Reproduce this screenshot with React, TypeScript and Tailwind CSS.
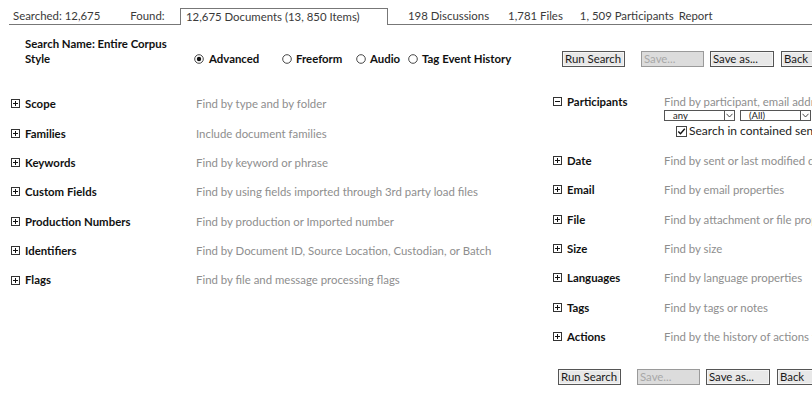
import React from 'react';

const font = "font-['Lato','Liberation_Sans',sans-serif]";

function PlusBox({ minus = false }: { minus?: boolean }) {
  return (
    <svg width="9" height="9" viewBox="0 0 9 9" className="shrink-0">
      <rect x="0.5" y="0.5" width="8" height="8" fill="white" stroke="#333" />
      <line x1="2" y1="4.5" x2="7" y2="4.5" stroke="#111" />
      {!minus && <line x1="4.5" y1="2" x2="4.5" y2="7" stroke="#111" />}
    </svg>
  );
}

function Radio({ checked = false }: { checked?: boolean }) {
  return (
    <svg width="10" height="10" viewBox="0 0 10 10" className="shrink-0">
      <circle cx="5" cy="5" r="4.3" fill="white" stroke="#333" strokeWidth="0.9" />
      {checked && <circle cx="5" cy="5" r="2.2" fill="#111" />}
    </svg>
  );
}

function Btn({ label, w, disabled = false }: { label: string; w: string; disabled?: boolean }) {
  return (
    <div
      className={`${w} shrink-0 h-[16px] flex items-center pl-[2px] border leading-none whitespace-nowrap ${
        disabled
          ? 'border-[#9a9a9a] bg-[#dcdcdc] text-[#a8a8a8]'
          : 'border-[#555] bg-[#e8e8e8] text-[#1a1a1a] shadow-[inset_0_0_0_1px_#f4f4f4]'
      }`}
    >
      {label}
    </div>
  );
}

function ButtonRow() {
  return (
    <div className="flex items-center shrink-0">
      <Btn label="Run Search" w="w-[63px]" />
      <div className="w-[16px] shrink-0" />
      <Btn label="Save..." w="w-[63px]" disabled />
      <div className="w-[6px] shrink-0" />
      <Btn label="Save as..." w="w-[64px]" />
      <div className="w-[7px] shrink-0" />
      <Btn label="Back" w="w-[40px]" />
    </div>
  );
}

function Select({ value }: { value: string }) {
  return (
    <div className="w-[71px] shrink-0 h-[11px] border border-[#555] flex items-center justify-between pl-[8px] overflow-hidden">
      <span className="leading-[9px]">{value}</span>
      <span className="w-[10px] h-full border-l border-[#555] flex items-center justify-center">
        <svg width="7" height="5" viewBox="0 0 7 5">
          <path d="M0.5 0.8 L3.5 4 L6.5 0.8" fill="none" stroke="#333" strokeWidth="0.9" />
        </svg>
      </span>
    </div>
  );
}

const leftRows = [
  ['Scope', 'Find by type and by folder'],
  ['Families', 'Include document families'],
  ['Keywords', 'Find by keyword or phrase'],
  ['Custom Fields', 'Find by using fields imported through 3rd party load files'],
  ['Production Numbers', 'Find by production or Imported number'],
  ['Identifiers', 'Find by Document ID, Source Location, Custodian, or Batch'],
  ['Flags', 'Find by file and message processing flags'],
];

const rightRows = [
  ['Date', 'Find by sent or last modified date'],
  ['Email', 'Find by email properties'],
  ['File', 'Find by attachment or file properties'],
  ['Size', 'Find by size'],
  ['Languages', 'Find by language properties'],
  ['Tags', 'Find by tags or notes'],
  ['Actions', 'Find by the history of actions taken'],
];

export default function App() {
  return (
    <div className={`w-[812px] h-[413px] overflow-hidden bg-white text-[11.4px] ${font}`}>
      {/* Tab strip */}
      <div className="flex items-end h-[25px] pt-[8px] text-[#3a3a3a]">
        <div className="ml-[9px] w-[171px] shrink-0 h-[17px] border-b border-[#777] flex items-center">
          <span className="ml-[4px]">Searched: 12,675</span>
          <span className="ml-[30px]">Found:</span>
        </div>
        <div className="w-[208px] shrink-0 h-[17px] border-l border-t border-r border-[#777] flex items-center pl-[5px] whitespace-nowrap">
          12,675 Documents (13, 850 Items)
        </div>
        <div className="flex-1 h-[17px] border-b border-[#777] flex items-center whitespace-nowrap">
          <span className="ml-[20px]">198 Discussions</span>
          <span className="ml-[19px]">1,781 Files</span>
          <span className="ml-[17px]">1, 509 Participants</span>
          <span className="ml-[5px]">Report</span>
        </div>
      </div>

      {/* Search header */}
      <div className="flex items-end h-[42px] text-[#111]">
        <div className="ml-[25px] w-[169px] shrink-0 font-bold leading-[15px] pb-[1px]">
          Search Name: Entire Corpus
          <br />
          Style
        </div>
        <div className="flex items-center gap-[5px] w-[88px] shrink-0 font-bold h-[17px]">
          <Radio checked />
          Advanced
        </div>
        <div className="flex items-center gap-[4px] w-[74px] shrink-0 font-bold h-[17px]">
          <Radio />
          Freeform
        </div>
        <div className="flex items-center gap-[4px] w-[52px] shrink-0 font-bold h-[17px]">
          <Radio />
          Audio
        </div>
        <div className="flex items-center gap-[4px] w-[154px] shrink-0 font-bold h-[17px] whitespace-nowrap">
          <Radio />
          Tag Event History
        </div>
        <div className="h-[17px] flex items-center shrink-0">
          <ButtonRow />
        </div>
      </div>

      {/* Body */}
      <div className="flex mt-[22px]">
        <div className="w-[549px] shrink-0 flex flex-col">
          {leftRows.map(([label, desc]) => (
            <div key={label} className="flex items-center h-[29.4px]">
              <div className="w-[196px] shrink-0 flex items-center gap-[5px] pl-[11px] font-bold text-[#111]">
                <PlusBox />
                {label}
              </div>
              <div className="text-[#8e8e8e] whitespace-nowrap">{desc}</div>
            </div>
          ))}
        </div>

        <div className="flex-1 min-w-0 flex flex-col mt-[5px]">
          <div className="flex">
            <div className="w-[115px] shrink-0 flex items-center gap-[5px] pl-[4px] font-bold text-[#111] h-[15px]">
              <PlusBox minus />
              Participants
            </div>
            <div className="flex flex-col whitespace-nowrap">
              <div className="text-[#8e8e8e] h-[15px] leading-[15px]">
                Find by participant, email address or domain
              </div>
              <div className="flex items-center gap-[5px] h-[12px] text-[9.5px] text-[#222]">
                <Select value="any" />
                <Select value="(All)" />
              </div>
              <div className="flex items-center gap-[2px] ml-[12px] mt-[1px] text-[#222] text-[12px]">
                <svg width="11" height="11" viewBox="0 0 11 11" className="shrink-0">
                  <rect x="0.5" y="0.5" width="10" height="10" fill="white" stroke="#444" />
                  <path d="M2.3 5.6 L4.5 7.8 L8.8 2.8" fill="none" stroke="#111" strokeWidth="1.4" />
                </svg>
                Search in contained senders and recipients
              </div>
            </div>
          </div>

          <div className="flex flex-col mt-[6px]">
            {rightRows.map(([label, desc]) => (
              <div key={label} className="flex items-center h-[29.3px]">
                <div className="w-[115px] shrink-0 flex items-center gap-[5px] pl-[4px] font-bold text-[#111]">
                  <PlusBox />
                  {label}
                </div>
                <div className="text-[#8e8e8e] whitespace-nowrap">{desc}</div>
              </div>
            ))}
          </div>

          <div className="mt-[18px] pl-[9px]">
            <ButtonRow />
          </div>
        </div>
      </div>
    </div>
  );
}
